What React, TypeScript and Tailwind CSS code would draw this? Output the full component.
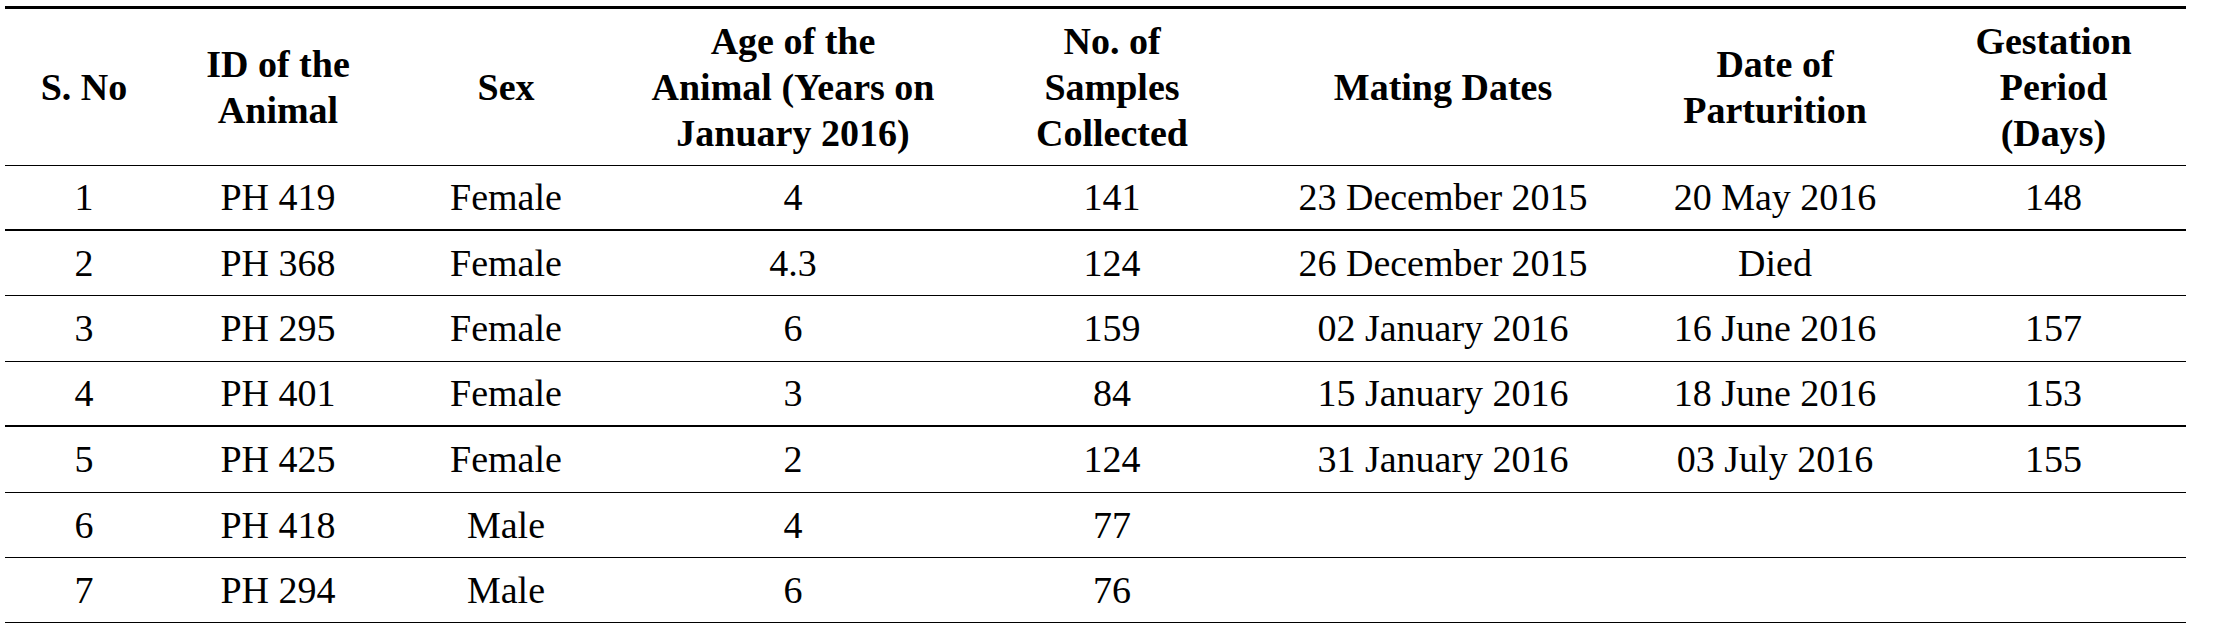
import { Fragment } from "react";

const columns = [
  { key: "no", label: ["S. No"], width: "w-[158px]" },
  { key: "id", label: ["ID of the", "Animal"], width: "w-[230px]" },
  { key: "sex", label: ["Sex"], width: "w-[226px]" },
  { key: "age", label: ["Age of the", "Animal (Years on", "January 2016)"], width: "w-[348px]" },
  { key: "samples", label: ["No. of", "Samples", "Collected"], width: "w-[290px]" },
  { key: "mating", label: ["Mating Dates"], width: "w-[372px]" },
  { key: "birth", label: ["Date of", "Parturition"], width: "w-[292px]" },
  { key: "gestation", label: ["Gestation", "Period", "(Days)"], width: "w-[265px]" },
];

const rows = [
  { h: "h-[65px] border-b-2", cells: ["1", "PH 419", "Female", "4", "141", "23 December 2015", "20 May 2016", "148"] },
  { h: "h-[65px] border-b", cells: ["2", "PH 368", "Female", "4.3", "124", "26 December 2015", "Died", ""] },
  { h: "h-[66px] border-b", cells: ["3", "PH 295", "Female", "6", "159", "02 January 2016", "16 June 2016", "157"] },
  { h: "h-[65px] border-b-2", cells: ["4", "PH 401", "Female", "3", "84", "15 January 2016", "18 June 2016", "153"] },
  { h: "h-[66px] border-b", cells: ["5", "PH 425", "Female", "2", "124", "31 January 2016", "03 July 2016", "155"] },
  { h: "h-[65px] border-b", cells: ["6", "PH 418", "Male", "4", "77", "", "", ""] },
  { h: "h-[65px] border-b", cells: ["7", "PH 294", "Male", "6", "76", "", "", ""] },
];

export default function App() {
  return (
    <div className="min-h-[625px] w-[2213px] bg-white pt-[6px] pl-[5px] font-['Liberation_Serif',serif] text-[38px] leading-[45px] text-black">
      <div className="w-[2181px]">
        {/* Header */}
        <div className="flex h-[160px] border-t-[3px] border-b border-black font-bold leading-[46px]">
          {columns.map((col) => (
            <div
              key={col.key}
              className={`${col.width} flex shrink-0 items-center justify-center text-center`}
            >
              <div>
                {col.label.map((line, i) => (
                  <Fragment key={line}>
                    {i > 0 && <br />}
                    {line}
                  </Fragment>
                ))}
              </div>
            </div>
          ))}
        </div>

        {/* Body */}
        {rows.map((row) => (
          <div key={row.cells[0]} className={`flex border-black ${row.h}`}>
            {row.cells.map((cell, c) => (
              <div
                key={columns[c].key}
                className={`${columns[c].width} flex shrink-0 items-center justify-center text-center`}
              >
                {cell}
              </div>
            ))}
          </div>
        ))}
      </div>
    </div>
  );
}
